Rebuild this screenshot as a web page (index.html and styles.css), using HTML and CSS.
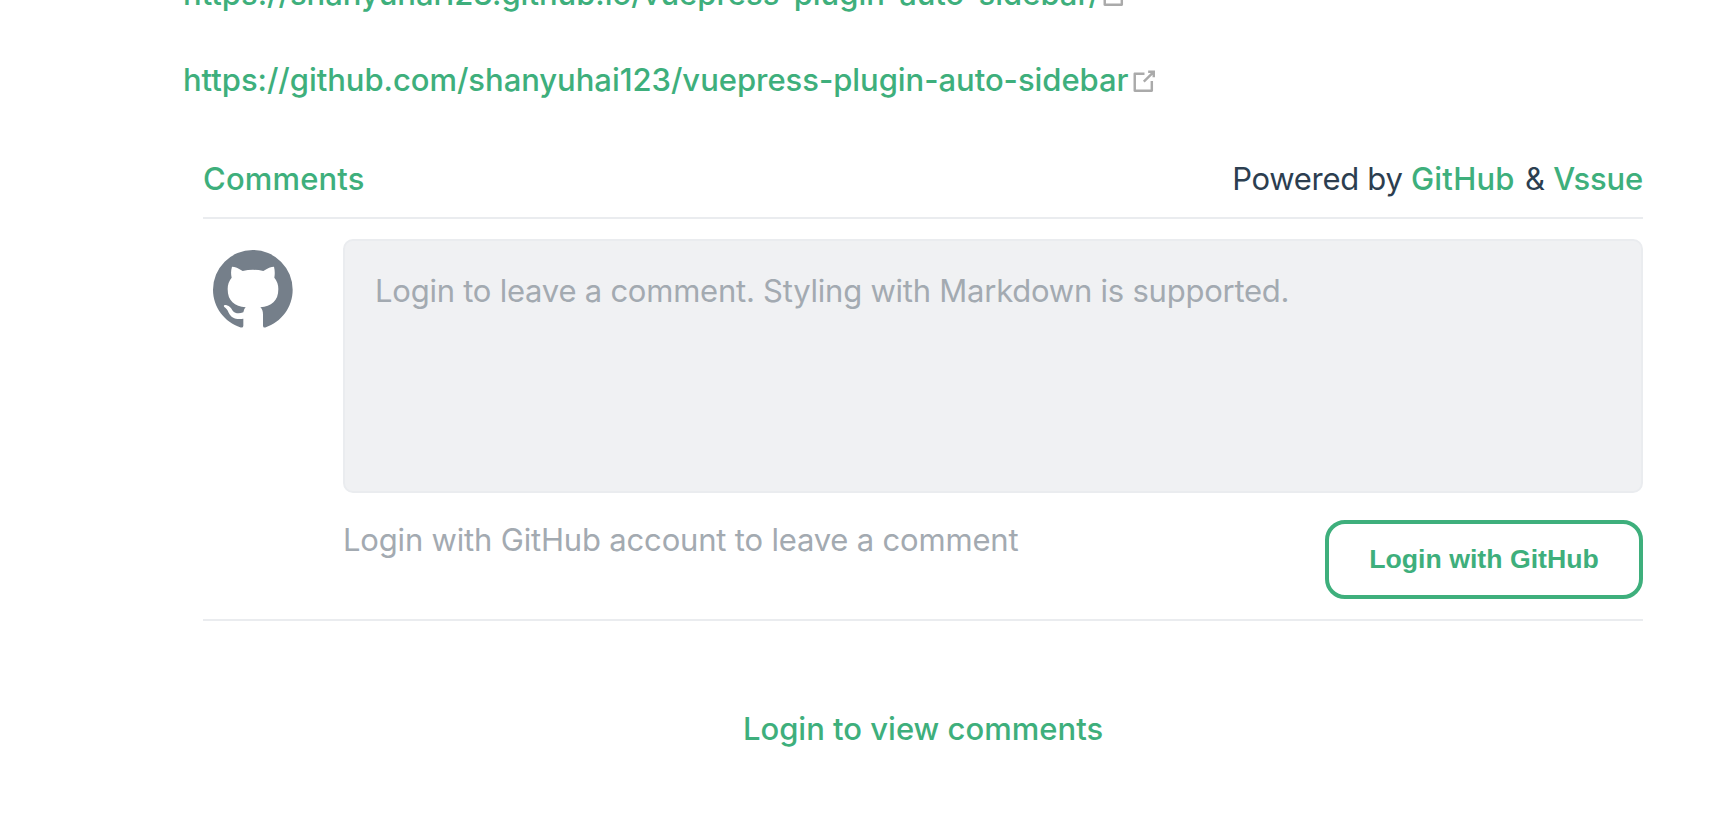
FILE: index.html
```
<!DOCTYPE html>
<html lang="en">
<head>
<meta charset="utf-8">
<title>Comments</title>
<link rel="stylesheet" href="styles.css">
</head>
<body>
<main class="page">
  <p class="link-row"><a class="link link-docs">https://shanyuhai123.github.io/vuepress-plugin-auto-sidebar/</a><svg class="outbound" viewBox="0 0 100 100"><path d="M18.8,85.1h56l0,0c2.2,0,4-1.8,4-4v-32h-8v28h-48v-48h28v-8h-32l0,0c-2.2,0-4,1.8-4,4v56C14.8,83.3,16.6,85.1,18.8,85.1z"/><path d="M45.7,48.7 51.3,54.3 77.2,28.5 77.2,37.2 85.2,37.2 85.2,14.9 62.8,14.9 62.8,22.9 71.5,22.9z"/></svg></p>
  <p class="link-row"><a class="link link-repo">https://github.com/shanyuhai123/vuepress-plugin-auto-sidebar</a><svg class="outbound" viewBox="0 0 100 100"><path d="M18.8,85.1h56l0,0c2.2,0,4-1.8,4-4v-32h-8v28h-48v-48h28v-8h-32l0,0c-2.2,0-4,1.8-4,4v56C14.8,83.3,16.6,85.1,18.8,85.1z"/><path d="M45.7,48.7 51.3,54.3 77.2,28.5 77.2,37.2 85.2,37.2 85.2,14.9 62.8,14.9 62.8,22.9 71.5,22.9z"/></svg></p>
  <section class="comments">
    <header class="comments-header">
      <a class="link comments-title">Comments</a>
      <span class="powered">Powered by <a class="link powered-github">GitHub</a> &amp; <a class="link powered-vssue">Vssue</a></span>
    </header>
    <div class="new-comment">
      <svg class="avatar" viewBox="69 90 240 234"><path d="M188.500 90A119.500 119.500 0 0 0 69 209.500C69 262 104 307 152 322.500Q160 324 160 317V296C137 299 124 294 116 278C113 270 108 264 103 261C99 257 104 254 110 256C119 258 123 265 128 272C136 282 149 281 160 277Q161 267 167 262C134 258 113 244 113 207Q113 187 125 173Q121 157 126 140Q139 140 158 153Q189 146 220 153Q239 140 252 140Q256 157 253 173Q265 187 265 207C265 244 244 258 211 262Q219 269 219 284V317Q219 324 226 322.500C274 307 308 262 308 209.500A119.500 119.500 0 0 0 188.500 90Z"/></svg>
      <div class="form">
        <div class="input"><span class="placeholder">Login to leave a comment. Styling with Markdown is supported.</span></div>
        <div class="actions">
          <span class="hint">Login with GitHub account to leave a comment</span>
          <button class="login">Login with GitHub</button>
        </div>
      </div>
    </div>
    <div class="view-row"><a class="link view">Login to view comments</a></div>
  </section>
</main>
</body>
</html>
```
FILE: styles.css
```
* { box-sizing: border-box; }
body {
  margin: 0;
  height: 814px;
  overflow: hidden;
  background: #fff;
  color: #2c3e50;
  font: 400 31px/54px Inter, "Liberation Sans", sans-serif;
  white-space: nowrap;
}
.page { margin-top: -33px; padding-left: 183px; }
.link { color: #3eaf7c; font-weight: 500; }
.link-row { display: flex; align-items: center; height: 54px; margin: 0 0 32px; }
.link-repo { letter-spacing: -0.04px; }
.link-docs { letter-spacing: -0.02px; }
.outbound { width: 30.5px; height: 30.5px; margin-top: 2px; fill: #aaa; }
.link-docs + .outbound { margin-left: -1px; }
.comments { width: 1440px; margin-left: 20px; padding-top: 13px; }
.comments-header {
  display: flex;
  justify-content: space-between;
  height: 67px;
  border-bottom: 2px solid #eaecef;
}
.comments-title { letter-spacing: 0.15px; }
.powered { letter-spacing: -0.3px; }
.powered-github { margin-right: 2px; letter-spacing: 0.2px; }
.powered-vssue { letter-spacing: -0.2px; }
.new-comment {
  display: flex;
  align-items: flex-start;
  height: 402px;
  padding-top: 20px;
  border-bottom: 2px solid #eaecef;
}
.avatar { flex: none; width: 80px; height: 78px; margin: 11px 50px 0 10px; fill: #757f8a; }
.form { width: 1300px; }
.input {
  height: 254px;
  padding: 23px 30px;
  border: 2px solid #eaecef;
  border-radius: 10px;
  background: #f0f1f3;
  color: #a3aab1;
}
.placeholder { letter-spacing: -0.235px; }
.actions { display: flex; justify-content: space-between; padding-top: 27px; }
.hint { color: #a3aab1; height: 54px; margin-top: -7px; letter-spacing: -0.18px; }
.login {
  width: 318px;
  height: 79px;
  padding: 0;
  border: 4px solid #3eaf7c;
  border-radius: 20px;
  background: #fff;
  color: #3eaf7c;
  font: 700 26.670px "Liberation Sans", Arial, sans-serif;
}
.view-row { display: flex; justify-content: center; padding-top: 81px; }
```
